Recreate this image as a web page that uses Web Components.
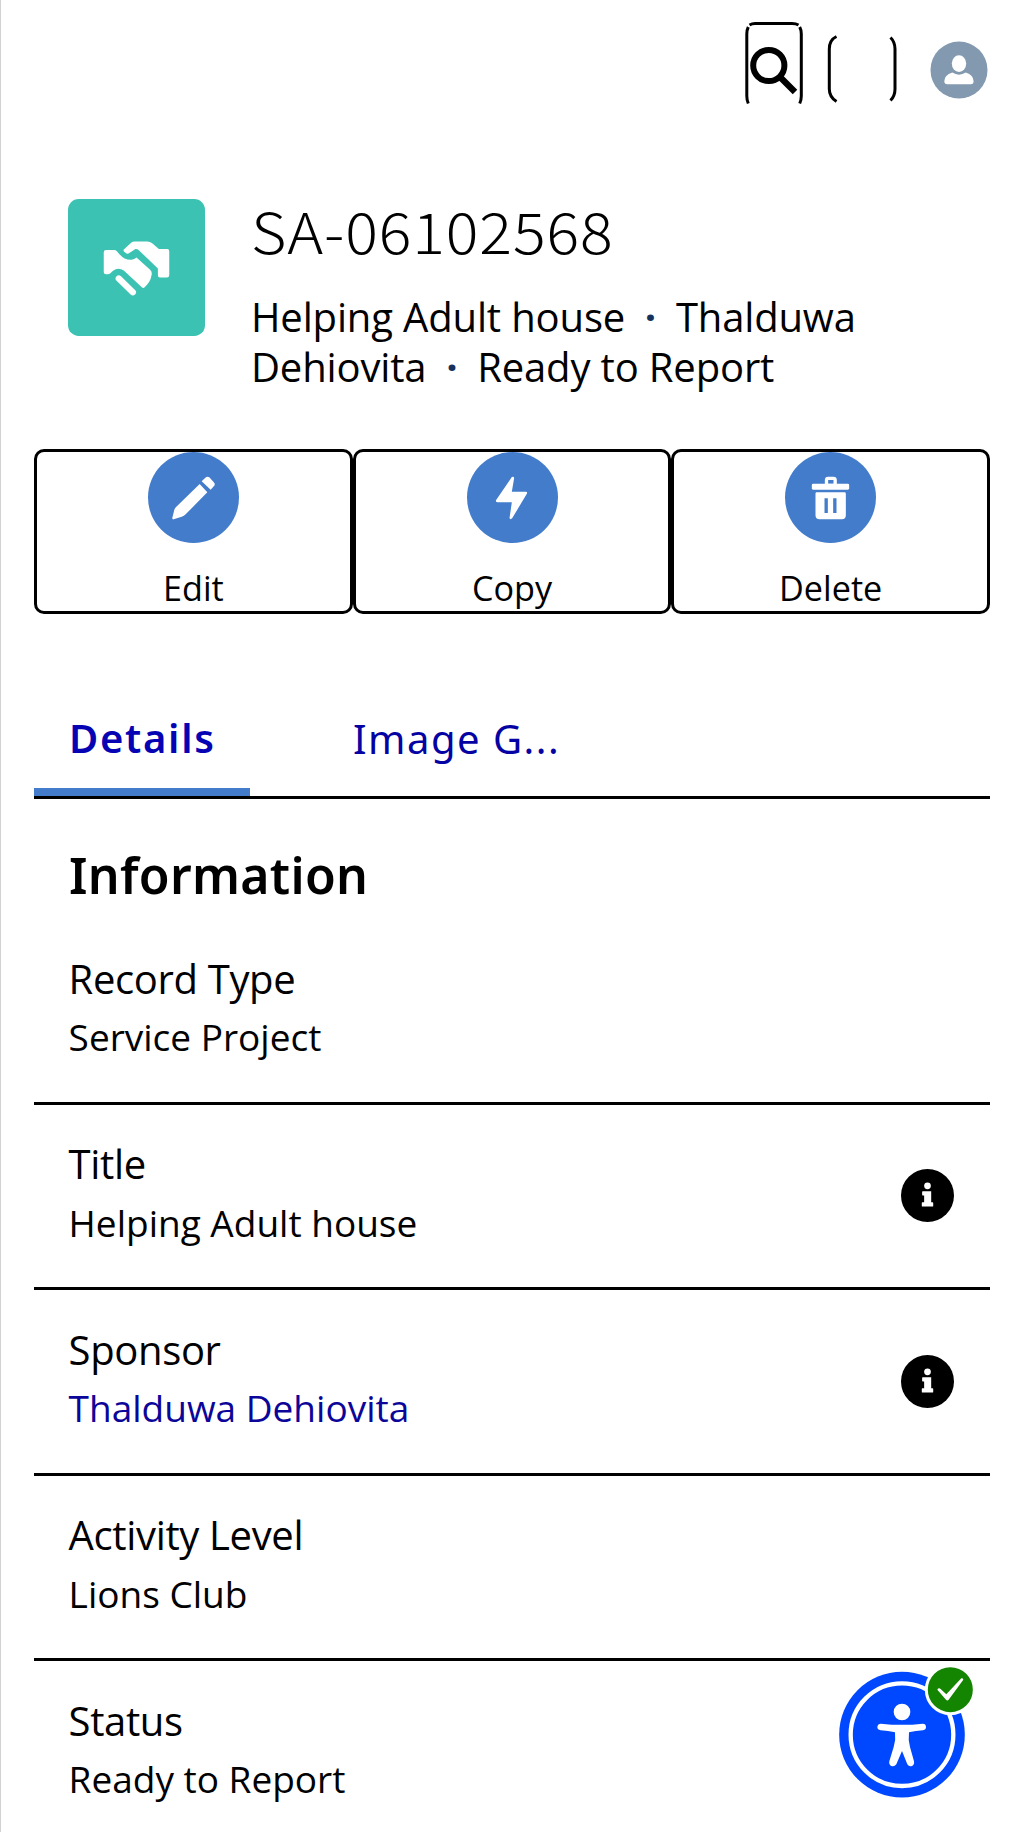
<!DOCTYPE html>
<html lang="en">
<head>
<meta charset="utf-8">
<title>SA-06102568</title>
<style>
html,body{margin:0;background:#fff}
body{height:1832px;overflow:hidden}
</style>
</head>
<body>
<record-page></record-page>
<script>
const define = (name, html) => customElements.define(name, class extends HTMLElement {
  constructor() {
    super();
    const t = document.createElement('template');
    t.innerHTML = html;
    this.attachShadow({ mode: 'open' }).append(t.content.cloneNode(true));
  }
});

define('top-bar', `<style>
:host{display:flex;justify-content:flex-end;align-items:flex-start;height:199px;box-sizing:border-box;padding:20px 36px 0 0}
svg{display:block;flex:none}
.search{margin-right:23px}
.slot{margin:12px 33.300px 0 0}
.user{margin-top:21px}
</style>
<svg class="search" width="60" height="86" viewBox="744 20 60 86" fill="none" stroke="#000">
<path stroke-width="3" d="M749.5 25Q752 23.600 755 23.600H792Q796 23.600 798.500 25M748.300 27Q746.800 30 746.800 34V96Q746.800 100 748.300 103.500M799.700 27Q801.300 30 801.300 34V96Q801.300 100 799.700 103.500"/>
<circle cx="768.8" cy="65.5" r="15.6" stroke-width="6"/><path d="M780 77L795 92" stroke-width="6.300"/></svg>
<svg class="slot" width="70" height="74" viewBox="827 32 70 74" fill="none" stroke="#000" stroke-width="3"><path d="M836.500 36.500Q829.300 40 829.300 49V89Q829.300 97 836.500 101.500M890.500 37.500Q895 42 895 49V89Q895 96 890.500 100.500"/></svg>
<svg class="user" width="58" height="58" viewBox="929.700 40.700 58 58"><circle cx="958.7" cy="69.700" r="28.500" fill="#8299af"/><ellipse cx="958.7" cy="63.300" rx="7.200" ry="8.300" fill="#fff"/><path fill="#fff" d="M947 84Q944 84 944 81Q944 75 952 72.300Q958.700 76.500 965.500 72.300Q973.300 75 973.300 81Q973.300 84 970.500 84Z"/></svg>`);

define('record-header', `<style>
:host{display:flex;height:250px;padding-left:68px;gap:46px;font-family:"Open Sans",sans-serif;color:#000}
svg{display:block;flex:none;width:137px;height:137px}
h1{margin:-9px 0 0;font:300 56px/80px "Noto Sans CJK SC",sans-serif;letter-spacing:.8px;transform:scaleX(1.09);transform-origin:0 50%;width:max-content}
p{margin:22px 0 0;font-size:40px;line-height:50px;width:640px;letter-spacing:-.150px}
.d{color:#16325c;margin:0 9.500px;font-weight:700}
</style>
<svg viewBox="85 56 410 410"><rect x="85" y="56" width="410" height="410" rx="32" fill="#3cc2b3"/><g fill="#fff"><path d="M252 207L274 187Q278 183 285 183H322Q330 183 336 188L357 206H382Q388 206 388 212V284Q388 291 381 291H360Q354 291 354 284V264L300 212Q294 205 287 206L266 219Q262 221 257 217Q248 211 252 207Z"/><path d="M192 216Q192 209 199 209H222Q228 209 232 213Q252 240 275 238Q284 236 290 231L330 267Q338 274 335 284Q332 305 312 322Q309 323 306 320L252 270Q240 262 228 266Q220 269 211 279Q208 281 204 281H199Q192 281 192 275Z"/><path d="M237 294L279 335" stroke="#fff" stroke-width="19" stroke-linecap="round"/></g></svg>
<div><h1><slot name="name"></slot></h1><p><slot name="title"></slot> <span class="d">·</span> <slot name="sponsor"></slot> <span class="d">·</span> <slot name="status"></slot></p></div>`);

define('action-button', `<style>
:host{display:flex;flex:1;flex-direction:column;align-items:center;box-sizing:border-box;height:165px;border:3px solid #000;border-radius:10px;font:34.200px/50px "Open Sans",sans-serif}
.c{width:91px;height:91px;border-radius:50%;background:#427ccb;flex:none;margin-bottom:20px}
::slotted(svg){display:block;width:91px;height:91px}
</style><div class="c"><slot name="icon"></slot></div><span><slot></slot></span>`);

define('action-bar', `<style>:host{display:flex;margin:0 34px}</style><slot></slot>`);

define('tab-bar', `<style>
:host{display:flex;margin:88px 34px 0;height:97px;box-sizing:border-box;border-bottom:3px solid #000;font:40px/56px "Noto Sans",sans-serif;letter-spacing:1.500px;color:#0502a3}
div{box-sizing:border-box;padding:9px 0 0 35px;white-space:nowrap}
.on{padding-top:8px;width:216px;border-bottom:8px solid #427ccb;font-weight:600;margin-right:68px;color:#0603b4;letter-spacing:1.700px}
</style><div class="on"><slot name="active"></slot></div><div><slot></slot></div>`);

define('section-title', `<style>:host{display:block;margin-left:69px;height:120px;box-sizing:border-box;padding-top:42px;font:600 50px/68px "Noto Sans",sans-serif;letter-spacing:.3px}</style><slot></slot>`);

define('info-badge', `<style>:host{display:block;width:53px;height:53px}svg{display:block}</style>
<svg width="53" height="53" viewBox="123 87 158 158"><circle cx="202" cy="166" r="79"/><circle cx="202" cy="137" r="10" fill="#fff"/><path fill="#fff" d="M188 153H213V186H217Q219 186 219 188V197Q219 199 217 199H187Q185 199 185 197V188Q185 186 187 186H192V166H188Q186 166 186 164V155Q186 153 188 153Z"/></svg>`);

define('record-field', `<style>
:host{display:flex;justify-content:space-between;align-items:center;box-sizing:border-box;height:185.600px;margin:0 34px;padding:0 36px 0 34.600px;border-bottom:3px solid #000;font:37px/50px "Open Sans",sans-serif}
.t{align-self:flex-start;padding-top:34.500px}
.l{font-size:40px;letter-spacing:-.350px;margin-bottom:8.500px}
</style><div class="t"><div class="l"><slot name="label"></slot></div><div><slot></slot></div></div><slot name="help"></slot>`);

define('accessibility-button', `<style>:host{display:block;position:absolute;left:839px;top:1666px}svg{display:block}</style>
<svg width="134.667" height="132" viewBox="57 78 404 396"><circle cx="246" cy="284" r="188.500" fill="#0048ff"/><circle cx="246" cy="284" r="154" fill="none" stroke="#fff" stroke-width="13"/>
<g fill="#fff"><circle cx="246" cy="216" r="25"/><path d="M183 251Q246 258 308 251Q318 251 318 261Q318 269 309 271Q287 273 267 277Q264 300 270 321L282 364Q284 374 276 378Q267 381 262 373L246 333L229 373Q223 381 214 378Q206 374 208 364L221 321Q228 300 225 277Q204 273 182 271Q172 269 172 261Q173 251 183 251Z"/></g>
<circle cx="391" cy="149" r="72" fill="#148500" stroke="#fff" stroke-width="9"/><path d="M352 149Q355 143 361 146L379 163L424 115Q429 114 430 119L386 179Q382 184 378 179Z" fill="#fff"/></svg>`);

define('record-page', `<style>:host{display:block;box-sizing:border-box;width:1024px;height:1832px;overflow:hidden;border-left:1px solid #d2d2d2;background:#fff;color:#000}
.in{margin-left:-1px}a{color:#0c0599;text-decoration:none}</style>
<div class="in">
<top-bar></top-bar>
<record-header><span slot="name">SA-06102568</span><span slot="title">Helping Adult house</span><span slot="sponsor">Thalduwa Dehiovita</span><span slot="status">Ready to Report</span></record-header>
<action-bar>
<action-button><svg slot="icon" viewBox="384 65 273 273" fill="#fff"><path d="M539 161L562 186L497 252Q492 257 485 259L461 267Q456 268 457 262L463 238Q465 232 469 229Z"/><path d="M545 153L556 142Q562 137 568 141L580 154Q586 159 584 165L572 178Z"/></svg>Edit</action-button>
<action-button><svg slot="icon" viewBox="380.5 65 273 273" fill="#fff"><path d="M515 140Q521 137 522 143L515 184H557Q563 185 560 190L516 264Q511 269 508 264L515 216H471Q465 214 468 209Z"/></svg>Copy</action-button>
<action-button><svg slot="icon" viewBox="375.5 65 273 273" fill="#fff"><rect x="456" y="160" width="112" height="18" rx="4"/><path fill-rule="evenodd" d="M495 162V149Q495 139 505 139H521Q531 139 531 149V162ZM505 160H521V149H505ZM470 186H554Q558 186 558 190V255Q558 267 546 267H479Q467 267 467 255V190Q467 186 470 186ZM494 204V248H504V204ZM520 204V248H530V204Z"/></svg>Delete</action-button>
</action-bar>
<tab-bar><span slot="active">Details</span>Image G...</tab-bar>
<section-title>Information</section-title>
<record-field><span slot="label">Record Type</span>Service Project</record-field>
<record-field><span slot="label">Title</span>Helping Adult house<info-badge slot="help"></info-badge></record-field>
<record-field><span slot="label">Sponsor</span><a>Thalduwa Dehiovita</a><info-badge slot="help"></info-badge></record-field>
<record-field><span slot="label">Activity Level</span>Lions Club</record-field>
<record-field><span slot="label">Status</span>Ready to Report</record-field>
</div>
<accessibility-button></accessibility-button>`);
</script>
</body>
</html>
